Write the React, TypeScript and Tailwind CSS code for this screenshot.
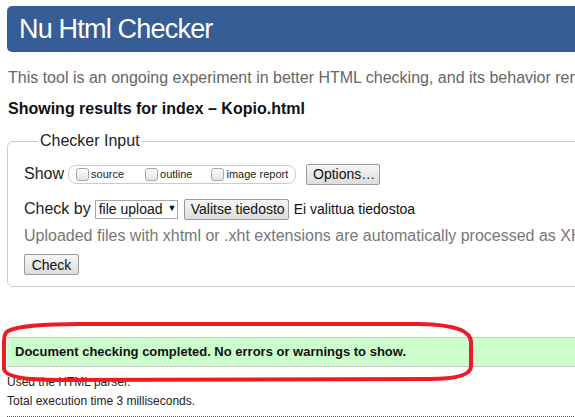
const Checkbox = ({ label, className = '' }: { label: string; className?: string }) => (
  <label className={`flex items-center gap-[2px] ${className}`}>
    <span className="inline-block w-[13px] h-[13px] rounded-[3px] border border-[#a6a6a6] bg-gradient-to-b from-[#fdfdfd] to-[#e4e4e4]" />
    <span className="text-[11px] text-[#222] whitespace-nowrap">{label}</span>
  </label>
);

const Btn = ({ children, className = '' }: { children: string; className?: string }) => (
  <button
    className={`h-[21px] px-[6px] text-[14px] leading-none whitespace-nowrap text-[#111] border border-[#9a9a9a] rounded-[2px] bg-gradient-to-b from-[#f7f7f7] to-[#dddddd] ${className}`}
  >
    {children}
  </button>
);

const App = () => {
  return (
    <div className="relative w-[575px] h-[417px] overflow-hidden bg-white font-['Liberation_Sans',Arial,sans-serif]">
      <div className="w-[800px] pl-[7px]">
        <header className="mt-[6px] h-[46px] bg-[#365d95] rounded-l-[5px] flex items-center pl-[12px]">
          <span className="text-[27px] tracking-[-0.8px] text-white leading-none">Nu Html Checker</span>
        </header>

        <p className="mt-[16px] pl-[1px] text-[16px] leading-[20px] text-[#666] whitespace-nowrap">
          This tool is an ongoing experiment in better HTML checking, and its behavior remains subject to change
        </p>
        <p className="mt-[11px] pl-[1px] text-[16px] leading-[20px] font-bold text-[#111] whitespace-nowrap">
          Showing results for index – Kopio.html
        </p>

        <fieldset className="mt-[12px] border border-[#ccc] rounded-[6px] pl-[16px] h-[156px]">
          <legend className="ml-[14px] px-[2px] text-[16px] leading-[20px] text-[#222]">Checker Input</legend>

          <div className="mt-[12px] flex items-center h-[22px]">
            <span className="text-[16px] text-[#222]">Show</span>
            <div className="ml-[4px] h-[19px] w-[228px] flex items-center pl-[7px] border border-[#ccc] rounded-[8px]">
              <Checkbox label="source" />
              <Checkbox label="outline" className="ml-[21px]" />
              <Checkbox label="image report" className="ml-[19px]" />
            </div>
            <Btn className="ml-[10px] w-[74px]">Options…</Btn>
          </div>

          <div className="mt-[13px] flex items-center h-[22px]">
            <span className="text-[16px] text-[#222]">Check by</span>
            <div className="ml-[4px] h-[19px] w-[83px] flex items-center gap-[5px] px-[3px] border border-[#a9a9a9] bg-white text-[14px] text-[#111] whitespace-nowrap">
              <span>file upload</span>
              <span className="text-[9px]">▼</span>
            </div>
            <Btn className="ml-[6px] w-[105px]">Valitse tiedosto</Btn>
            <span className="ml-[5px] text-[14px] text-[#111] whitespace-nowrap">Ei valittua tiedostoa</span>
          </div>

          <p className="mt-[6px] text-[16px] leading-[20px] text-[#777] whitespace-nowrap">
            Uploaded files with xhtml or .xht extensions are automatically processed as XHTML using the XML parser
          </p>

          <Btn className="mt-[8px] w-[55px]">Check</Btn>
        </fieldset>

        <div className="mt-[50px] h-[30px] bg-[#ccffcc] border-y border-[#c8c8c8] flex items-center pl-[8px]">
          <p className="text-[13px] font-bold text-[#111] whitespace-nowrap">
            Document checking completed. No errors or warnings to show.
          </p>
        </div>

        <p className="mt-[7px] text-[12px] leading-[16px] text-[#222]">Used the HTML parser.</p>
        <p className="mt-[3px] text-[12px] leading-[16px] text-[#222]">Total execution time 3 milliseconds.</p>
        <div className="mt-[7px] border-t border-dotted border-[#555]" />
      </div>

      <svg className="absolute left-0 top-0 pointer-events-none" width="575" height="417">
        <path
          d="M 8 331 C 20 325, 50 324, 80 324 L 420 324 Q 471 325 471 342 L 471 366 Q 471 379 430 379 L 60 380 Q 5 380 4 369 L 4 342 Q 4 333 8 331 Z"
          fill="none"
          stroke="#ed1c24"
          strokeWidth="4"
        />
      </svg>
    </div>
  );
};

export default App;
